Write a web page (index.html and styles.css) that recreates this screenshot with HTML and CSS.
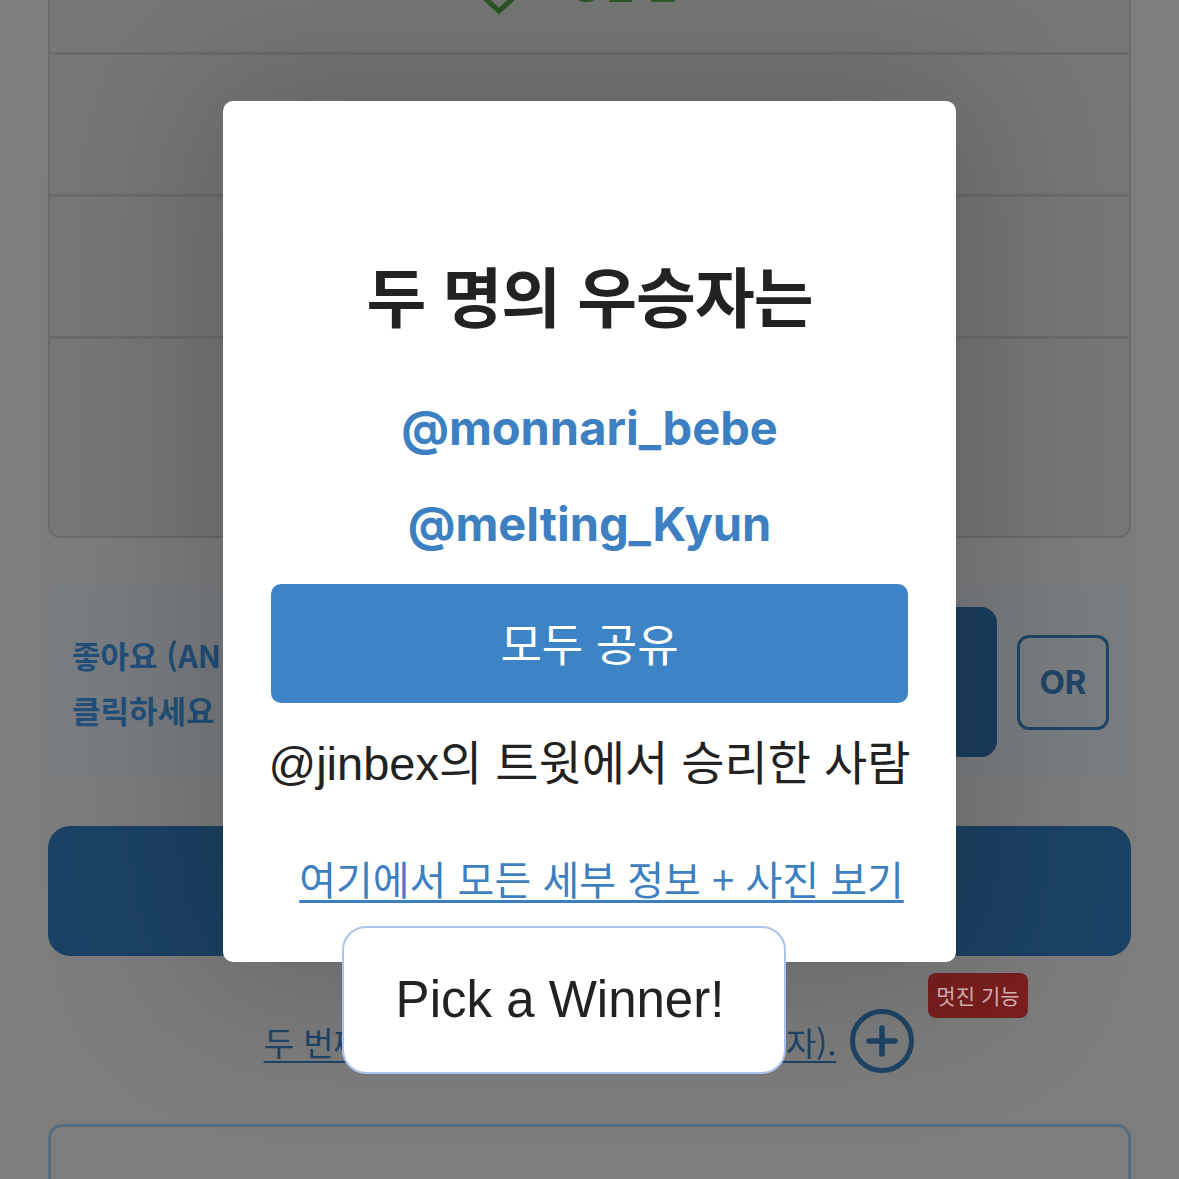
FILE: index.html
```html
<!DOCTYPE html>
<html lang="ko">
<head>
<meta charset="utf-8">
<title>Pick a Winner</title>
<link rel="stylesheet" href="styles.css">
</head>
<body>
<div class="page">
  <div class="table">
    <div class="row row-first">
      <svg class="check" width="40" height="30" viewBox="0 0 40 30"><polyline points="0,8 20,26 40,8" fill="none" stroke="#2b5626" stroke-width="5" stroke-linejoin="miter"/></svg>
      <span class="done">당첨 완료</span>
    </div>
    <div class="row row-mid"></div>
    <div class="row row-mid"></div>
    <div class="row row-last"></div>
  </div>

  <div class="like-panel">
    <p class="like-text">좋아요 (AND) 리트윗 모두<br>클릭하세요</p>
    <div class="dark-btn"></div>
    <div class="or-box">OR</div>
  </div>

  <div class="big-btn"></div>

  <div class="second-row">
    <span class="second-link">두 번째 우승자를 추가 선택 (대체 당첨자).</span>
    <span class="plus-wrap">
      <svg class="plus" width="66" height="66" viewBox="0 0 66 66"><circle cx="33" cy="33" r="29.5" fill="none" stroke="#1e4466" stroke-width="5"/><path d="M33 20v26M20 33h26" stroke="#1e4466" stroke-width="5.5" stroke-linecap="round"/></svg>
      <span class="badge">멋진 기능</span>
    </span>
  </div>

  <div class="bottom-box"></div>
</div>

<div class="modal">
  <h1 class="title">두 명의 우승자는</h1>
  <p class="winner">@monnari_bebe</p>
  <p class="winner winner-2">@melting_Kyun</p>
  <div class="share">모두 공유</div>
  <p class="from">@jinbex의 트윗에서 승리한 사람</p>
  <p class="details"><span class="details-link">여기에서 모든 세부 정보 + 사진 보기</span></p>
</div>

<div class="pick">Pick a Winner!</div>
</body>
</html>
```

FILE: styles.css
```css
html, body {
  margin: 0;
  padding: 0;
}
body {
  background: #7d7d7d;
  width: 1179px;
  height: 1179px;
  overflow: hidden;
  font-family: "Noto Sans CJK KR", "Noto Sans", sans-serif;
}
.page {
  padding: 0 48px;
  margin-top: -90px;
}
.table {
  border: 2px solid #6a6b6a;
  border-top: none;
  border-radius: 0 0 12px 12px;
  background: #767876;
}
.row {
  border-bottom: 3px solid #6b6c6b;
}
.row-first {
  height: 142px;
  display: flex;
  justify-content: center;
  align-items: flex-end;
  gap: 50px;
  padding-left: 12px;
}
.check {
  display: block;
  margin-bottom: 37px;
}
.done {
  font-size: 36px;
  font-weight: 700;
  color: #2b5626;
  line-height: 36px;
  margin-bottom: 51px;
}
.row-mid {
  height: 139px;
}
.row-last {
  height: 197px;
  border-bottom: none;
}
.like-panel {
  margin: 49px 2px 0;
  height: 190px;
  box-sizing: border-box;
  background: #7a7d81;
  display: flex;
  align-items: center;
  padding: 0 20px 0 22px;
  gap: 20px;
}
.like-text {
  flex: 1;
  margin: 0;
  font-size: 31px;
  font-weight: 700;
  line-height: 55px;
  color: #22507b;
  white-space: nowrap;
  overflow: hidden;
}
.dark-btn {
  width: 420px;
  height: 150px;
  border-radius: 16px;
  background: #1a3e5f;
}
.or-box {
  width: 86px;
  height: 89px;
  border: 3px solid #1f4568;
  border-radius: 12px;
  display: flex;
  align-items: center;
  justify-content: center;
  font-family: "Inter", "Noto Sans", sans-serif;
  font-weight: 700;
  font-size: 33px;
  color: #1f4568;
}
.big-btn {
  margin-top: 49px;
  height: 130px;
  border-radius: 22px;
  background: #1b4264;
}
.second-row {
  display: flex;
  justify-content: center;
  align-items: center;
  height: 168px;
}
.second-link {
  font-size: 33px;
  color: #1e4466;
  text-decoration: underline;
  text-decoration-thickness: 2px;
  text-underline-offset: 5px;
  margin-right: 13px;
  margin-top: 4px;
  white-space: nowrap;
}
.plus-wrap {
  position: relative;
  display: block;
  margin-top: 2px;
}
.plus {
  display: block;
}
.badge {
  position: absolute;
  left: 79px;
  top: -35px;
  background: #7a1f1f;
  color: #d8b4b4;
  font-size: 21px;
  line-height: 45px;
  padding: 0 8px;
  border-radius: 8px;
  white-space: nowrap;
}
.bottom-box {
  height: 120px;
  border: 3px solid #566d80;
  border-radius: 14px;
}

/* modal */
.modal {
  position: absolute;
  left: 223px;
  top: 101px;
  width: 733px;
  height: 861px;
  box-sizing: border-box;
  background: #fff;
  border-radius: 10px;
  box-shadow: 0 0 160px 30px rgba(0, 0, 0, 0.18);
  padding: 150px 48px 0;
  display: flex;
  flex-direction: column;
  align-items: center;
  text-align: center;
}
.title {
  margin: 0;
  font-size: 65px;
  line-height: 86px;
  font-weight: 700;
  color: #222;
  letter-spacing: -1px;
}
.winner {
  margin: 61px 0 0;
  font-family: "Inter", "Noto Sans", sans-serif;
  font-weight: 700;
  font-size: 47px;
  line-height: 60px;
  color: #3c80c2;
}
.winner-2 {
  margin-top: 36px;
}
.share {
  margin-top: 30px;
  align-self: stretch;
  height: 119px;
  border-radius: 10px;
  background: #3c84c6;
  color: #fff;
  font-size: 45px;
  display: flex;
  align-items: center;
  justify-content: center;
  padding-bottom: 2px;
  box-sizing: border-box;
}
.from {
  margin: 36px 0 0;
  font-family: "Liberation Sans", "Noto Sans CJK KR", sans-serif;
  font-size: 47px;
  line-height: 50px;
  color: #222;
  white-space: nowrap;
}
.details {
  margin: 64px 0 0;
  padding-left: 24px;
  font-size: 40px;
  line-height: 50px;
}
.details-link {
  color: #3d7fbf;
  text-decoration: underline;
  text-decoration-thickness: 3px;
  text-underline-offset: 5px;
  white-space: nowrap;
}

/* floating button */
.pick {
  position: absolute;
  left: 342px;
  top: 926px;
  width: 444px;
  height: 148px;
  box-sizing: border-box;
  background: #fff;
  border: 2px solid #a9c1ec;
  border-radius: 24px;
  display: flex;
  align-items: center;
  justify-content: center;
  font-family: "Liberation Sans", "Noto Sans", sans-serif;
  font-size: 51px;
  color: #222;
  padding: 0 8px 2px 0;
}
```
